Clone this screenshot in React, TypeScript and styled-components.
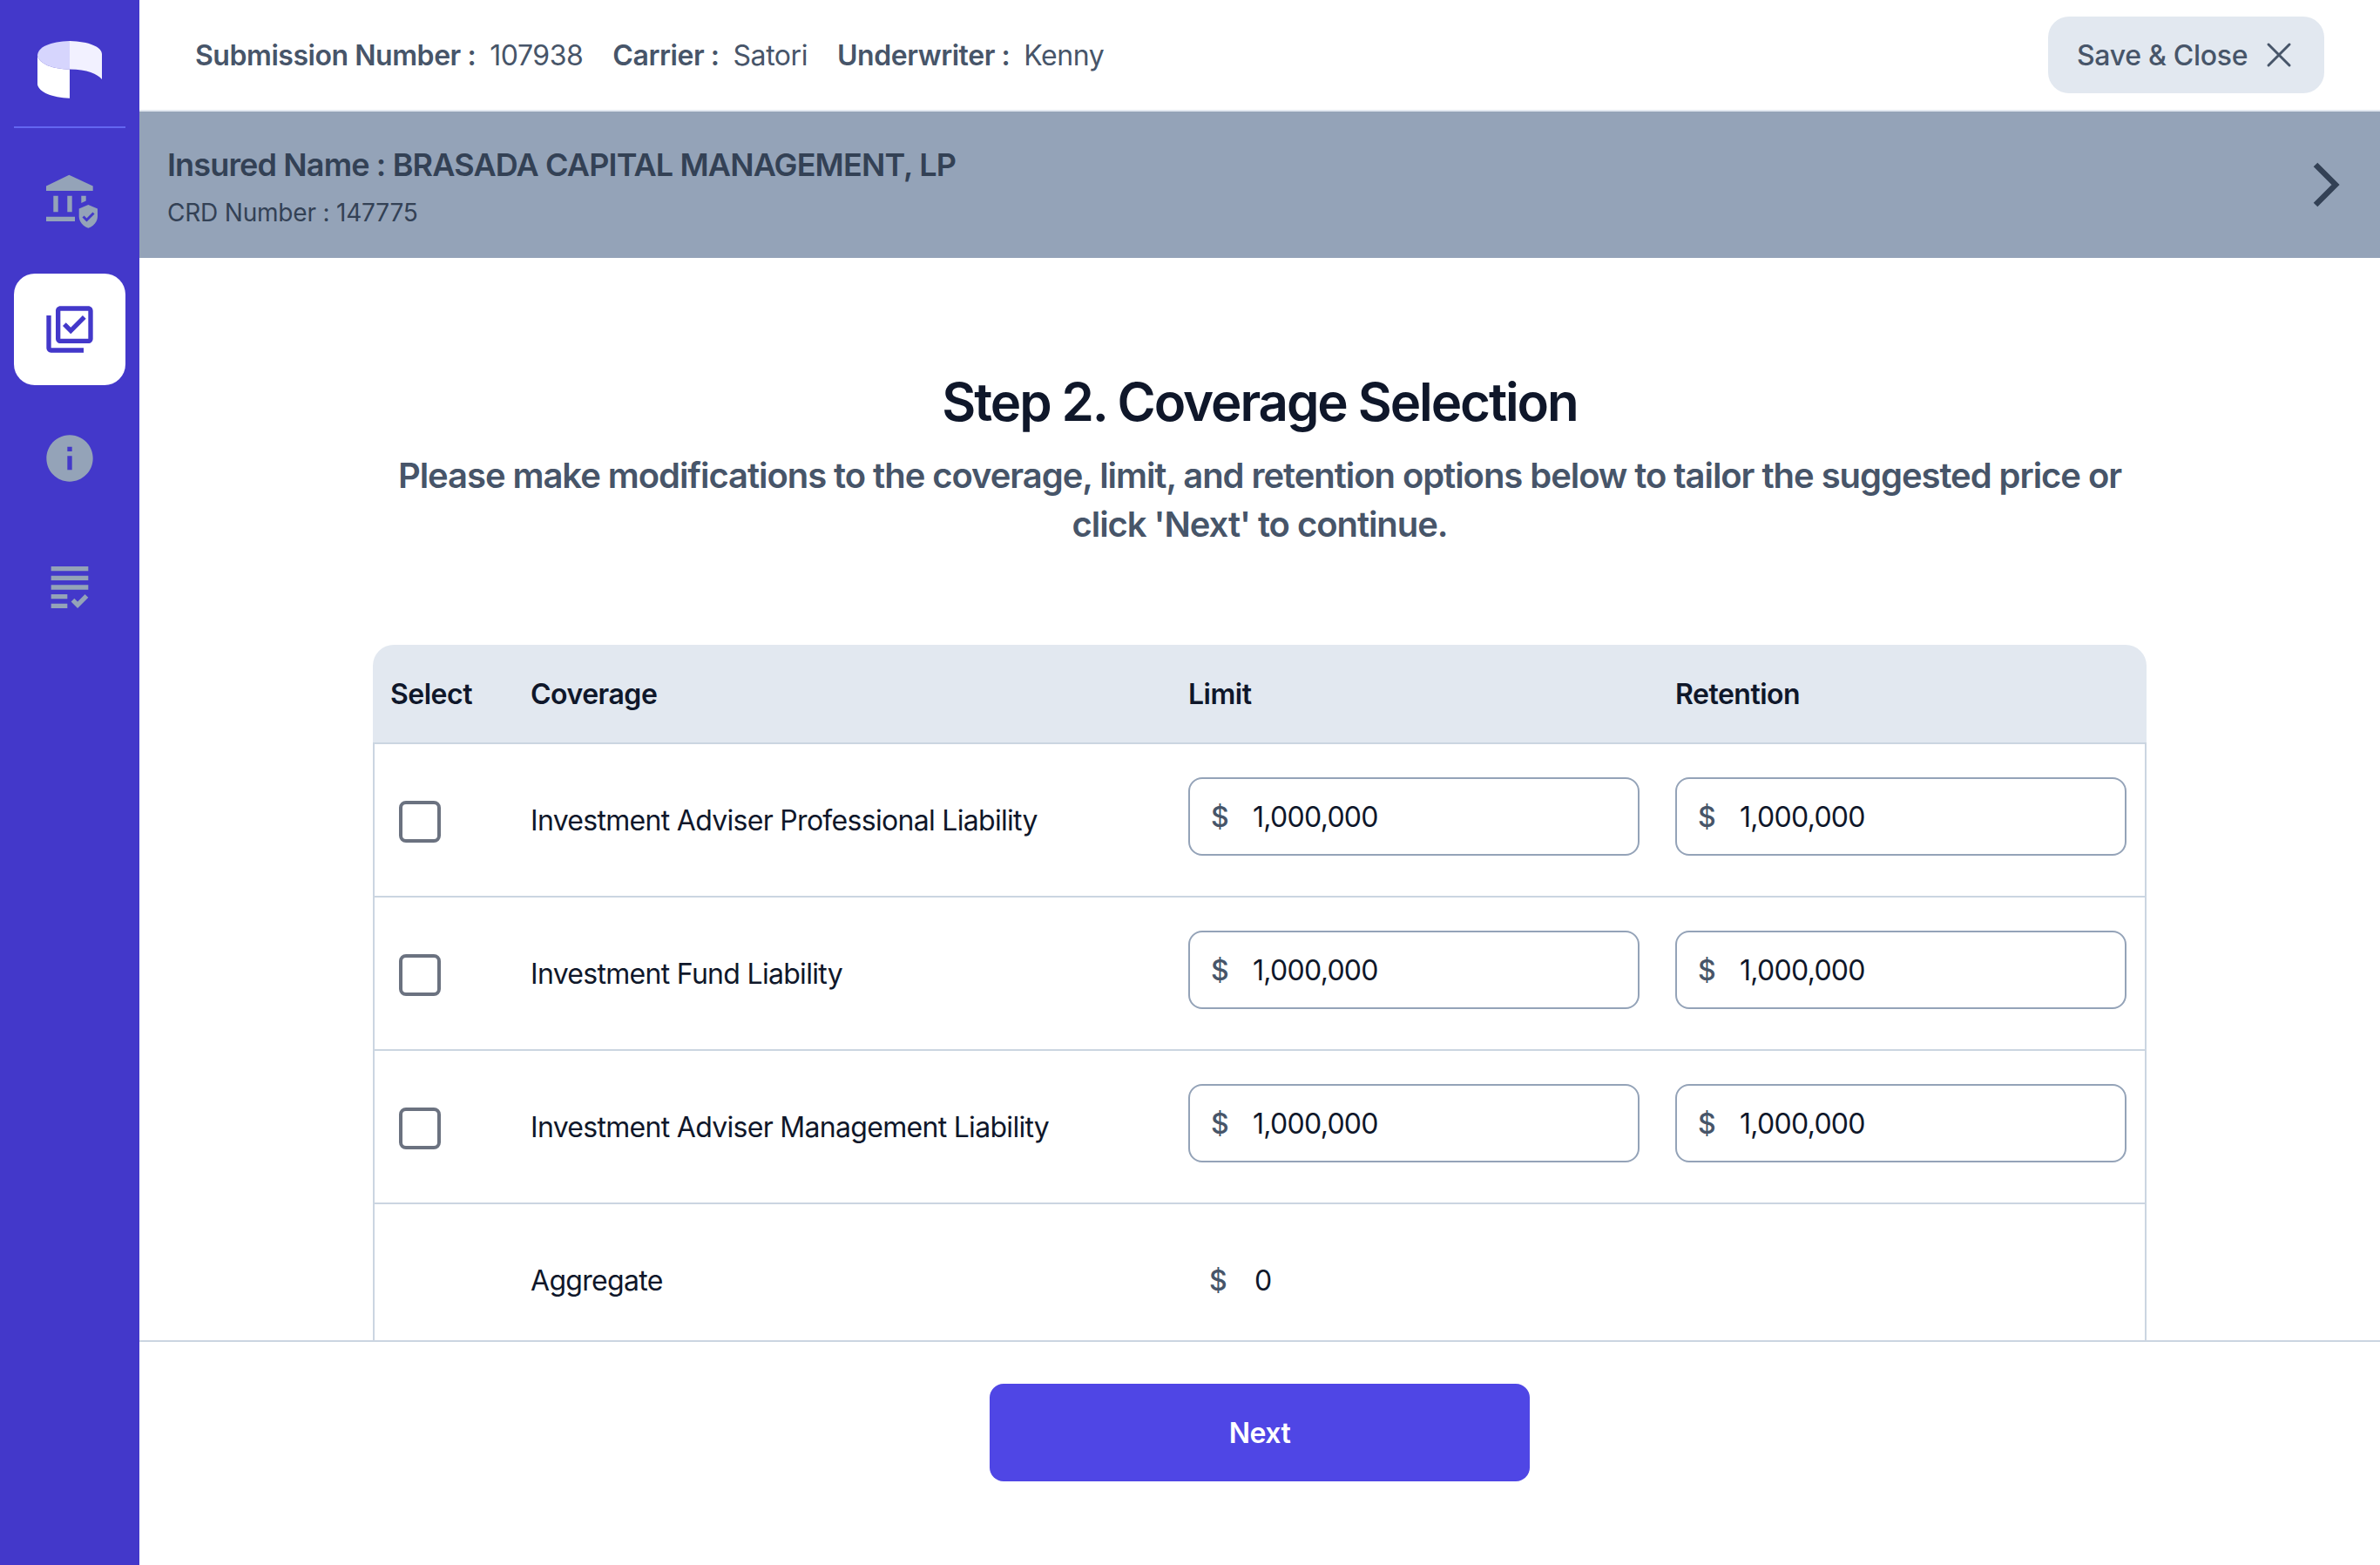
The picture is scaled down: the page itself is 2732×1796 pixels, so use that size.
import styled, { createGlobalStyle } from "styled-components";
import { MdGrading, MdInfo, MdOutlineLibraryAddCheck } from "react-icons/md";
import { HiOutlineXMark } from "react-icons/hi2";

const GlobalStyle = createGlobalStyle`
  html, body {
    margin: 0;
    padding: 0;
    background: #fff;
    font-family: Inter, "Noto Sans", sans-serif;
  }
  * {
    box-sizing: border-box;
  }
`;

const Page = styled.div`
  display: flex;
  width: 2732px;
  height: 1796px;
  overflow: hidden;
`;

const Sidebar = styled.aside`
  flex: 0 0 160px;
  display: flex;
  flex-direction: column;
  align-items: center;
  background: #4338ca;
`;

const LogoBlock = styled.div`
  width: 128px;
  height: 147px;
  display: flex;
  align-items: flex-start;
  justify-content: center;
  padding-top: 44px;
  border-bottom: 2px solid #6366f1;
`;

const Nav = styled.nav`
  display: flex;
  flex-direction: column;
  gap: 20px;
  margin-top: 19px;
`;

const NavItem = styled.div<{ $active?: boolean }>`
  width: 128px;
  height: 128px;
  display: flex;
  align-items: center;
  justify-content: center;
  border-radius: 24px;
  background: ${(p) => (p.$active ? "#fff" : "transparent")};
  color: ${(p) => (p.$active ? "#4338ca" : "#94a3b8")};
`;

const Main = styled.main`
  flex: 1;
  min-width: 0;
  display: flex;
  flex-direction: column;
`;

const TopBar = styled.header`
  flex: 0 0 128px;
  display: flex;
  align-items: center;
  justify-content: space-between;
  padding: 0 64px;
  border-bottom: 2px solid #e2e8f0;
`;

const Meta = styled.div`
  display: flex;
  gap: 34px;
  font-size: 32px;
  letter-spacing: -0.45px;
  color: #475569;
`;

const MetaLabel = styled.span`
  font-weight: 600;
  margin-right: 16px;
`;

const SaveButton = styled.button`
  display: flex;
  align-items: center;
  gap: 12px;
  width: 317px;
  height: 88px;
  padding: 0 0 0 33px;
  border: 0;
  border-radius: 24px;
  background: #e2e8f0;
  color: #475569;
  font-family: inherit;
  font-size: 32px;
  font-weight: 500;
  letter-spacing: -0.3px;
`;

const InsuredBar = styled.section`
  flex: 0 0 168px;
  display: flex;
  align-items: center;
  justify-content: space-between;
  padding: 0 41px 0 32px;
  background: #94a3b8;
  color: #334155;
`;

const InsuredText = styled.div`
  padding-top: 6px;
`;

const InsuredName = styled.div`
  font-size: 36px;
  line-height: 44px;
  font-weight: 600;
  letter-spacing: -0.85px;
`;

const CrdNumber = styled.div`
  margin-top: 13px;
  font-size: 28px;
  line-height: 40px;
  letter-spacing: -0.2px;
`;

const Content = styled.div`
  flex: 1;
  min-height: 0;
  overflow: hidden;
  display: flex;
  flex-direction: column;
  align-items: center;
  padding-top: 129px;
`;

const Title = styled.h1`
  margin: 0;
  font-size: 60px;
  line-height: 72px;
  font-weight: 600;
  letter-spacing: -2.1px;
  color: #0f172a;
`;

const Subtitle = styled.p`
  width: 2036px;
  margin: 21px 0 110px;
  font-size: 40px;
  line-height: 56px;
  font-weight: 600;
  letter-spacing: -1.06px;
  text-align: center;
  color: #475569;
`;

const Table = styled.div`
  flex: none;
  width: 2036px;
`;

const Row = styled.div`
  display: grid;
  grid-template-columns: 160px 755px 559px minmax(0, 1fr);
  align-items: center;
  height: 176px;
  padding: 0 21px 0 19px;
  font-size: 32px;
  letter-spacing: -0.7px;
  color: #0f172a;
  border: 2px solid #cbd5e1;
  border-top: 0;
`;

const HeadRow = styled(Row)`
  grid-template-columns: 161px 755px 559px minmax(0, 1fr);
  height: 114px;
  padding: 0 23px 0 20px;
  font-weight: 600;
  letter-spacing: -0.5px;
  background: #e2e8f0;
  border-width: 0 0 2px;
  border-radius: 24px 24px 0 0;
`;

const Checkbox = styled.span`
  display: block;
  width: 48px;
  height: 48px;
  margin: 4px 0 0 9px;
  border: 4px solid #6b7280;
  border-radius: 8px;
`;

const MoneyField = styled.label`
  display: flex;
  align-items: center;
  width: 518px;
  height: 90px;
  margin-bottom: 8px;
  padding-left: 24px;
  border: 2px solid #94a3b8;
  border-radius: 16px;
`;

const Currency = styled.span`
  flex: 0 0 48px;
  font-weight: 500;
  color: #475569;
`;

const MoneyInput = styled.input`
  flex: 1;
  min-width: 0;
  padding: 0;
  border: 0;
  outline: 0;
  background: none;
  color: #0f172a;
  font-family: inherit;
  font-size: 32px;
  letter-spacing: -0.7px;
`;

const AggregateValue = styled.div`
  display: flex;
  gap: 4px;
  padding-left: 24px;
`;

const Footer = styled.footer`
  flex: 0 0 258px;
  display: flex;
  justify-content: center;
  padding-top: 48px;
  background: #fff;
  border-top: 2px solid #cbd5e1;
`;

const NextButton = styled.button`
  width: 620px;
  height: 112px;
  border: 0;
  border-radius: 16px;
  background: #4f46e5;
  color: #fff;
  font-family: inherit;
  font-size: 32px;
  font-weight: 600;
  letter-spacing: -0.5px;
`;

const Logo = () => (
  <svg width="80" height="72" viewBox="40 44 80 72" aria-hidden>
    <path d="M80 47C58 47.5 43 54 43 64C45 73 60 79.5 80 79.5Z" fill="#d6d5fd" />
    <path d="M80 47C102 47.5 117 54 117 62V91C112 85 100 79.5 80 79.5Z" fill="#f2f1ff" />
    <path d="M43 64C45 73 60 79.5 80 79.5V112.7C60 112 45 106 43 97Z" fill="#fff" />
  </svg>
);

// bank with a small shield over its corner, not in the icon packs
const BankShield = () => (
  <svg width="64" height="64" viewBox="0 0 64 64" fill="currentColor" aria-hidden>
    <path d="M5 15.4 31.3 2.7 58.7 15.4V21H5Z" />
    <path d="M13.3 26.7H18.7V45.3H13.3ZM29.3 26.7H34.7V45.3H29.3ZM45.3 26.7H50.7V32.5L45.3 35Z" />
    <path d="M5 50.7H38V56H5Z" />
    <path d="M53.3 37 64 41.5V50C64 56.5 59.5 61.5 53.3 63.7C47.2 61.5 42.7 56.5 42.7 50V41.5Z" />
    <path d="M47.5 50.5 51.5 54.5 59.5 46.5" fill="none" stroke="#4338ca" strokeWidth="3" />
  </svg>
);

const Chevron = () => (
  <svg width="40" height="60" viewBox="0 0 40 60" fill="none" stroke="#334155" strokeWidth="6.5" aria-hidden>
    <polyline points="7,7 30,30 7,53" />
  </svg>
);

const coverages = [
  "Investment Adviser Professional Liability",
  "Investment Fund Liability",
  "Investment Adviser Management Liability",
];

const Money = () => (
  <MoneyField>
    <Currency>$</Currency>
    <MoneyInput readOnly value="1,000,000" />
  </MoneyField>
);

export default function App() {
  return (
    <Page>
      <GlobalStyle />
      <Sidebar>
        <LogoBlock>
          <Logo />
        </LogoBlock>
        <Nav>
          <NavItem>
            <BankShield />
          </NavItem>
          <NavItem $active>
            <MdOutlineLibraryAddCheck size={64} />
          </NavItem>
          <NavItem>
            <MdInfo size={64} />
          </NavItem>
          <NavItem>
            <MdGrading size={64} />
          </NavItem>
        </Nav>
      </Sidebar>
      <Main>
        <TopBar>
          <Meta>
            <span>
              <MetaLabel>Submission Number :</MetaLabel>107938
            </span>
            <span>
              <MetaLabel>Carrier :</MetaLabel>Satori
            </span>
            <span>
              <MetaLabel>Underwriter :</MetaLabel>Kenny
            </span>
          </Meta>
          <SaveButton>
            Save &amp; Close
            <HiOutlineXMark size={48} />
          </SaveButton>
        </TopBar>
        <InsuredBar>
          <InsuredText>
            <InsuredName>Insured Name : BRASADA CAPITAL MANAGEMENT, LP</InsuredName>
            <CrdNumber>CRD Number : 147775</CrdNumber>
          </InsuredText>
          <Chevron />
        </InsuredBar>
        <Content>
          <Title>Step 2. Coverage Selection</Title>
          <Subtitle>
            Please make modifications to the coverage, limit, and retention options below to tailor the
            suggested price or click 'Next' to continue.
          </Subtitle>
          <Table>
            <HeadRow>
              <span>Select</span>
              <span>Coverage</span>
              <span>Limit</span>
              <span>Retention</span>
            </HeadRow>
            {coverages.map((name) => (
              <Row key={name}>
                <Checkbox />
                <span>{name}</span>
                <Money />
                <Money />
              </Row>
            ))}
            <Row>
              <span />
              <span>Aggregate</span>
              <AggregateValue>
                <Currency>$</Currency>
                <span>0</span>
              </AggregateValue>
            </Row>
          </Table>
        </Content>
        <Footer>
          <NextButton>Next</NextButton>
        </Footer>
      </Main>
    </Page>
  );
}
